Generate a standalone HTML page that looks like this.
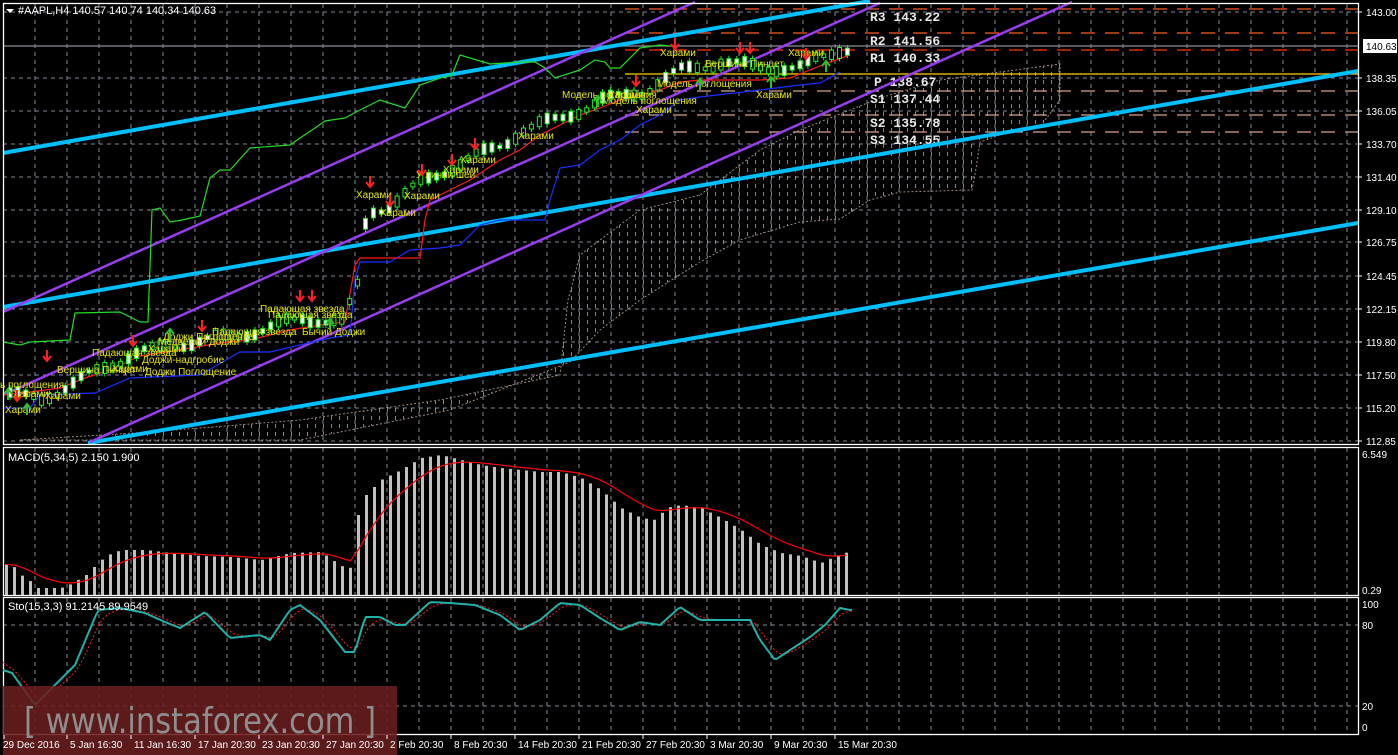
<!DOCTYPE html>
<html><head><meta charset="utf-8"><style>
html,body{margin:0;padding:0;background:#000;width:1398px;height:755px;overflow:hidden}
svg{display:block}
text{font-family:"Liberation Sans","DejaVu Sans",sans-serif}
</style></head><body>
<svg id="s" width="1398" height="755" xmlns="http://www.w3.org/2000/svg">
<defs>
<pattern id="cl" width="8" height="8" patternUnits="userSpaceOnUse">
<rect x="3" y="0" width="1" height="4" fill="#f0b080"/>
</pattern>
</defs>
<g id="grid"></g>
<!-- cloud -->
<polygon points="20,440 150,432 300,420 440,400 560,375 568,300 580,255 640,210 700,195 760,150 800,130 880,98 940,80 1000,72 1060,64 1060,100 1040,127 1000,135 980,142 975,175 972,190 900,192 870,200 840,219 800,222 740,240 700,262 640,300 600,330 570,362 450,410 300,440" fill="url(#cl)" stroke="#e0c0b0" stroke-width="1" stroke-dasharray="2,2" opacity="0.7"/>
<!-- pivot lines -->
<g stroke-width="1.3">
<line x1="625" y1="9" x2="1358" y2="9" stroke="#ff5a1e" stroke-dasharray="14,10"/>
<line x1="625" y1="33" x2="1358" y2="33" stroke="#ff5a1e" stroke-dasharray="14,10"/>
<line x1="625" y1="50" x2="1358" y2="50" stroke="#ff3300" stroke-dasharray="14,10"/>
<line x1="625" y1="74" x2="1358" y2="74" stroke="#ffd000"/>
<line x1="625" y1="91" x2="1358" y2="91" stroke="#d8a090" stroke-dasharray="14,10"/>
<line x1="625" y1="115" x2="1358" y2="115" stroke="#d8a090" stroke-dasharray="14,10"/>
<line x1="625" y1="132" x2="1358" y2="132" stroke="#d8a090" stroke-dasharray="14,10"/>
</g>
<line x1="3" y1="46" x2="1358" y2="46" stroke="#8a9098" stroke-width="1.3"/>
<g fill="#e8e8e8" font-size="13" font-weight="bold">
<text x="870" y="21" style="font-family:'Liberation Mono',monospace">R3 143.22</text>
<text x="870" y="45" style="font-family:'Liberation Mono',monospace">R2 141.56</text>
<text x="870" y="62" style="font-family:'Liberation Mono',monospace">R1 140.33</text>
<text x="874" y="86" style="font-family:'Liberation Mono',monospace">P 138.67</text>
<text x="870" y="103" style="font-family:'Liberation Mono',monospace">S1 137.44</text>
<text x="870" y="127" style="font-family:'Liberation Mono',monospace">S2 135.78</text>
<text x="870" y="144" style="font-family:'Liberation Mono',monospace">S3 134.55</text>
</g>
<!-- cyan lines -->
<g stroke="#00bfff" stroke-width="4">
<line x1="3" y1="153" x2="870" y2="1"/>
<line x1="3" y1="307" x2="1358" y2="71"/>
<line x1="88" y1="443" x2="1358" y2="223"/>
</g>
<!-- purple lines -->
<g stroke="#9a3cf0" stroke-width="2.5">
<line x1="3" y1="312" x2="695" y2="2"/>
<line x1="3" y1="395" x2="880" y2="3"/>
<line x1="90" y1="442" x2="1072" y2="2"/>
</g>
<!-- chikou green -->
<polyline fill="none" stroke="#22dd22" stroke-width="1.2" points="3,342 20,345 30,342 70,340 75,313 120,312 140,322 148,322 152,210 160,208 170,222 182,220 200,216 210,178 220,170 230,170 250,148 290,145 300,138 315,128 325,121 345,118 360,110 380,100 405,108 420,85 440,78 452,75 460,55 470,58 490,64 520,62 535,62 545,68 555,78 580,70 595,60 605,62 610,68 620,68 640,48 660,45 670,46"/>
<!-- blue kijun -->
<polyline fill="none" stroke="#1530ff" stroke-width="1.2" points="3,408 30,408 40,395 95,393 130,378 200,375 240,352 270,352 300,345 330,338 350,335 355,280 360,262 390,262 410,250 440,248 460,245 480,225 500,220 545,220 550,200 560,168 580,165 600,150 620,140 640,125 660,115 680,100 700,97 760,90 800,85 820,83 840,72"/>
<!-- red tenkan -->
<polyline fill="none" stroke="#ff1a1a" stroke-width="1.2" points="3,395 30,392 60,388 85,378 110,370 140,356 180,350 220,343 250,340 290,330 320,325 345,322 355,265 360,258 420,258 425,220 430,200 450,190 470,180 500,160 520,150 540,135 560,125 580,115 600,108 620,100 640,95 660,90 680,82 700,80 740,80 760,80 790,78 810,70 830,62 850,55"/>
<g id="candles"></g>
<g id="labels" font-size="10" fill="#e6e600"></g>
<!-- frames -->
<g fill="none" stroke="#fff" stroke-width="1.3">
<rect x="3.5" y="3.5" width="1355" height="441"/>
<rect x="3.5" y="447.5" width="1355" height="148"/>
<rect x="3.5" y="597.5" width="1355" height="137"/>
</g>
<g id="macd"></g>
<g id="sto"></g>
<!-- watermark -->
<rect x="3" y="686" width="394" height="69" fill="#6a1e1e" opacity="0.88"/>
<text x="24" y="733" font-size="36" fill="#8e8e8e" textLength="352" lengthAdjust="spacingAndGlyphs" style="font-family:'DejaVu Sans','Liberation Sans',sans-serif">[ www.instaforex.com ]</text>
<!-- header -->
<polygon points="6,9 14,9 10,13" fill="#fff"/>
<text x="18" y="14" font-size="11" fill="#fff">#AAPL,H4  140.57 140.74 140.34 140.63</text>
<text x="8" y="461" font-size="11" fill="#fff">MACD(5,34,5) 2.150 1.900</text>
<text x="8" y="610" font-size="11" fill="#fff">Sto(15,3,3) 91.2145 89.9549</text>
<!-- right axis -->
<g id="axis" font-size="10" fill="#fff"></g>
<rect x="1363" y="39" width="34" height="14" fill="#fff"/>
<text x="1366" y="50" font-size="10" fill="#000">140.63</text>
<g id="time" font-size="10" fill="#fff"></g>
</svg>
<script>
var NS="http://www.w3.org/2000/svg";
function el(p,t,a,txt){var e=document.createElementNS(NS,t);for(var k in a)e.setAttribute(k,a[k]);if(txt)e.textContent=txt;document.getElementById(p).appendChild(e);return e;}
var gs={stroke:"#7f8a99","stroke-width":"1","stroke-dasharray":"4,4"};
for(var x=35;x<1358;x+=32){[[4,444],[448,595],[598,734]].forEach(function(r){el("grid","line",Object.assign({x1:x,x2:x,y1:r[0],y2:r[1]},gs));});}
var ys=[12,78,111,144,177,210,242,276,309,342,375,408,441];
ys.forEach(function(y){el("grid","line",Object.assign({x1:3,x2:1358,y1:y,y2:y},gs));});
[625,706].forEach(function(y){el("grid","line",Object.assign({x1:3,x2:1358,y1:y,y2:y},gs));});
var al=["143.00","138.35","136.05","133.70","131.40","129.10","126.75","124.45","122.15","119.80","117.50","115.20","112.85"];
ys.forEach(function(y,i){el("axis","line",{x1:1358,x2:1362,y1:y,y2:y,stroke:"#fff"});el("axis","text",{x:1366,y:y+4},al[i]);});
[["6.549",458],["0.29",594],["100",608],["80",629],["20",710],["0",731]].forEach(function(a){el("axis","text",{x:1362,y:a[1]},a[0]);});
var tl=["29 Dec 2016","5 Jan 16:30","11 Jan 16:30","17 Jan 20:30","23 Jan 20:30","27 Jan 20:30","2 Feb 20:30","8 Feb 20:30","14 Feb 20:30","21 Feb 20:30","27 Feb 20:30","3 Mar 20:30","9 Mar 20:30","15 Mar 20:30"];
tl.forEach(function(t,i){var x=i==0?3:66+(i-1)*64;el("time","line",{x1:x+1,x2:x+1,y1:735,y2:739,stroke:"#fff"});el("time","text",{x:i==0?3:x+4,y:748},t);});
function interp(pts,x){for(var i=1;i<pts.length;i++){if(x<=pts[i][0]){var a=pts[i-1],b=pts[i];return a[1]+(b[1]-a[1])*(x-a[0])/(b[0]-a[0]);}}return pts[pts.length-1][1];}
var mp=[[3,564],[12,566],[20,575],[28,580],[35,588],[60,588],[70,584],[85,575],[95,565],[105,556],[120,550],[145,550],[170,553],[200,556],[230,557],[260,560],[290,553],[320,552],[340,566],[350,568],[355,520],[365,495],[380,480],[400,470],[420,458],[440,455],[460,460],[480,465],[500,468],[540,472],[560,472],[580,478],[600,490],[620,508],[640,518],[655,520],[665,508],[680,505],[700,508],[720,518],[740,530],[760,545],[780,553],[800,556],[820,563],[835,556],[850,551]];
var sig=null,spts=[];
for(var x=5;x<=852;x+=8){var y=interp(mp,x);el("macd","rect",{x:x,y:y,width:3,height:595-y,fill:"#c0c0c0"});sig=sig===null?y:sig+(y-sig)*0.25;spts.push(x+1.5+","+sig.toFixed(1));}
el("macd","polyline",{points:spts.join(" "),fill:"none",stroke:"#ff0000","stroke-width":"1.2"});
var sp=[[3,670],[12,673],[35,705],[60,680],[75,665],[98,610],[120,608],[145,613],[165,622],[180,628],[205,612],[230,638],[260,635],[270,640],[290,610],[300,605],[320,620],[345,652],[355,652],[365,617],[380,617],[395,625],[405,625],[430,602],[450,603],[475,605],[500,615],[520,630],[540,620],[560,603],[580,605],[600,618],[620,630],[640,622],[660,625],[680,607],[700,620],[720,620],[750,620],[760,640],[775,660],[790,650],[810,637],[825,625],[840,608],[850,610]];
var a=[],b=[],s=null;
for(var x=3;x<=852;x+=3){var y=interp(sp,x);a.push(x+","+y.toFixed(1));s=s===null?y-8:s+(y-s)*0.3;b.push(x+","+s.toFixed(1));}
el("sto","polyline",{points:b.join(" "),fill:"none",stroke:"#ff2020","stroke-width":"1","stroke-dasharray":"2,2"});
el("sto","polyline",{points:a.join(" "),fill:"none",stroke:"#20b2aa","stroke-width":"2"});
var cp=[[5,395],[40,398],[70,385],[100,368],[130,355],[170,345],[220,338],[260,330],[300,318],[340,322],[355,290],[365,212],[390,205],[420,182],[440,172],[470,158],[500,145],[520,130],[560,118],[600,100],[640,92],[680,70],[720,62],[760,68],[800,67],[840,48]];
for(var x=8;x<=848;x+=7.9){var y=interp(cp,x)+(Math.sin(x*0.7)*4);var h=3+Math.abs(Math.sin(x*1.3))*8;var up=Math.sin(x*0.9)>0;
el("candles","line",{x1:x+2,x2:x+2,y1:y-h/2-3,y2:y+h/2+3,stroke:"#22ee22","stroke-width":"1"});
el("candles","rect",{x:x,y:y-h/2,width:4,height:h,fill:up?"#fff":"#000",stroke:"#22ee22","stroke-width":"1"});}
var L=[["Харами",5,413],["Харами",45,399],["ь поглощения",0,388],["Харами",13,397],["Вершина Пинцет",57,373],["Харами",112,372],["Падающая звезда",92,356],["Доджи Поглощение",145,375],["Доджи-надгробие",142,363],["Медвежий Доджи",158,345],["Харами",148,352],["Доджи Поглощение",163,340],["Падающая звезда",212,335],["Падающая звезда",260,312],["Падающая звезда",268,318],["Бычий Доджи",302,335],["Харами",356,198],["Харами",380,216],["Харами",404,199],["У линии шеи",416,178],["Харами",443,173],["Харами",460,163],["Харами",518,139],["Модель поглощения",562,98],["Харами",608,98],["Модель поглощения",602,104],["Харами",636,113],["Модель поглощения",657,87],["Харами",660,56],["Вершина Пинцет",705,67],["Харами",788,56],["Харами",756,98]];
L.forEach(function(l){el("labels","text",{x:l[1],y:l[2]},l[0]);});
var R=[[17,400],[47,360],[133,345],[202,330],[300,300],[312,300],[370,186],[390,205],[422,174],[452,164],[475,148],[675,48],[740,52],[750,52],[806,58],[636,85]];
R.forEach(function(r){el("labels","path",{d:"M"+r[0]+","+(r[1]-10)+"v10m-4,-4l4,5l4,-5",stroke:"#ff2020","stroke-width":"2",fill:"none"});});
var G=[[8,390],[27,405],[170,330],[330,320],[700,80],[771,78],[826,62],[598,97]];
G.forEach(function(r){el("labels","path",{d:"M"+r[0]+","+(r[1]+10)+"v-10m-4,4l4,-5l4,5",stroke:"#33bb33","stroke-width":"2",fill:"none"});});
</script>
</body></html>
